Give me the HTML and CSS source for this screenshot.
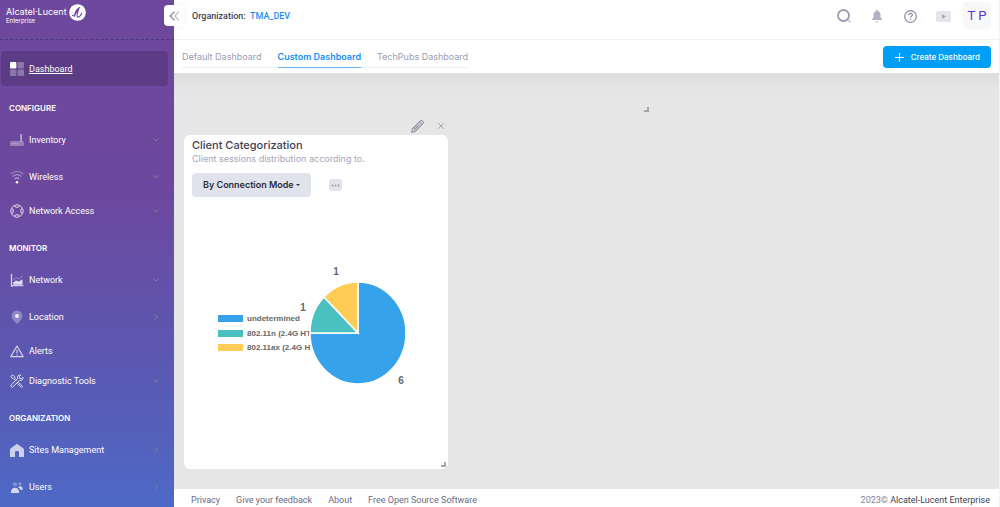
FILE: index.html
```html
<!DOCTYPE html>
<html lang="en">
<head>
    <meta charset="utf-8">
    <title>Custom Dashboard</title>
    <link rel="stylesheet" href="styles.css">
</head>
<body>
    <!-- Sidebar -->
    <aside class="sidebar">
        <div class="brand">
            <div class="brand-name">Alcatel·Lucent<small>Enterprise</small></div>
            <svg class="brand-logo" viewBox="0 0 18 18">
                <circle cx="9" cy="9" r="8.800" fill="#fff"/>
                <path d="M3.600 12.200c1.200.8 2.600-.5 3.800-2.500l3.400-5.800c-3.200 1.600-5.400 7-4.800 9.200M10.800 3.900 9 9.600c-.8 2.600-.7 4.400.5 4.300 1.500-.2 3-2 4-4.200" fill="none" stroke="#6e489d" stroke-width="1.100" stroke-linecap="round"/>
            </svg>
        </div>
        <button type="button" class="collapse" aria-label="Collapse menu">
            <svg width="11" height="10" viewBox="0 0 11 10" fill="none" stroke-width="1.300">
                <path d="M5.500 .8 1.200 5l4.300 4.200" stroke="#8b8ba3"/>
                <path d="M10 .8 5.700 5l4.300 4.200" stroke="#c3c3d0"/>
            </svg>
        </button>
        <nav class="menu">
            <a href="#" class="item active">
                <svg class="icon" viewBox="0 0 14 14" fill="#fff">
                    <rect width="6.400" height="6.400" rx="1"/>
                    <g opacity=".3"><rect x="7.600" width="6.400" height="6.400" rx="1"/><rect y="7.600" width="6.400" height="6.400" rx="1"/><rect x="7.600" y="7.600" width="6.400" height="6.400" rx="1"/></g>
                </svg>
                <span>Dashboard</span>
            </a>

            <h2 class="section">CONFIGURE</h2>
            <a href="#" class="item">
                <svg class="icon" viewBox="0 0 14 14" fill="#fff">
                    <rect x="10.500" y="1" width="1.200" height="7.500" opacity=".75"/>
                    <path opacity=".3" d="M1.500 8h11a1.500 1.500 0 0 1 1.500 1.500v2a1.500 1.500 0 0 1-1 1.500H1a1.500 1.500 0 0 1-1-1.500v-2A1.500 1.500 0 0 1 1.500 8z"/>
                    <path opacity=".35" d="M2 10h1.300v1.200H2zm2.500 0h1.300v1.200H4.500zM7 10h1.300v1.200H7z"/>
                </svg>
                <span>Inventory</span>
                <svg class="arrow" viewBox="0 0 6 6"><path d="M.5 1.500 3 4l2.500-2.500"/></svg>
            </a>
            <a href="#" class="item">
                <svg class="icon" viewBox="0 0 14 14" fill="none" stroke="#fff" stroke-width="1.200">
                    <path opacity=".3" d="M.8 4C4.500.4 9.500.4 13.200 4"/>
                    <path opacity=".4" d="M2.800 6.500c2.600-2.400 5.800-2.400 8.400 0"/>
                    <path opacity=".5" d="M4.800 9c1.400-1.300 3-1.300 4.400 0"/>
                    <circle cx="7" cy="12.300" r="1.200" fill="#fff" stroke="none"/>
                </svg>
                <span>Wireless</span>
                <svg class="arrow" viewBox="0 0 6 6"><path d="M.5 1.500 3 4l2.500-2.500"/></svg>
            </a>
            <a href="#" class="item tight">
                <svg class="icon" viewBox="0 0 14 14" fill="none" stroke="#fff" opacity=".8">
                    <path d="M5 1.800C3 1.800 1.800 3 1.800 5M9 1.800c2 0 3.200 1.200 3.200 3.200M5 12.200c-2 0-3.200-1.200-3.200-3.200M9 12.200c2 0 3.200-1.200 3.200-3.200"/>
                    <rect x="5" y=".8" width="4" height="2.400" rx="1"/><rect x="5" y="10.800" width="4" height="2.400" rx="1"/>
                    <rect x=".8" y="5" width="2.400" height="4" rx="1"/><rect x="10.800" y="5" width="2.400" height="4" rx="1"/>
                </svg>
                <span>Network Access</span>
                <svg class="arrow" viewBox="0 0 6 6"><path d="M.5 1.500 3 4l2.500-2.500"/></svg>
            </a>

            <h2 class="section">MONITOR</h2>
            <a href="#" class="item">
                <svg class="icon" viewBox="0 0 14 14" fill="#fff">
                    <path d="M.8 1h1.400v11H13.500v1.300H2.200V14H.8z" opacity=".7"/>
                    <path d="M3.200 11.700V9.500L6 7.500l3 1 3.500-2.200v5.400z" opacity=".8"/>
                    <path d="m3 7 3-2.500L9 6l3.500-3.500" fill="none" stroke="#fff" opacity=".3"/>
                </svg>
                <span>Network</span>
                <svg class="arrow" viewBox="0 0 6 6"><path d="M.5 1.500 3 4l2.500-2.500"/></svg>
            </a>
            <a href="#" class="item">
                <svg class="icon" viewBox="0 0 14 14" fill="#fff">
                    <path opacity=".3" d="M7 .5a5.300 5.300 0 0 1 5.300 5.400C12.300 8.800 9.600 11.600 7 14 4.400 11.600 1.700 8.800 1.700 5.900A5.300 5.300 0 0 1 7 .5z"/>
                    <circle cx="7" cy="6" r="2" opacity=".85"/>
                </svg>
                <span>Location</span>
                <svg class="arrow" viewBox="0 0 6 6"><path d="M2 .5 4.500 3 2 5.500"/></svg>
            </a>
            <a href="#" class="item tight">
                <svg class="icon" viewBox="0 0 14 14" fill="none" stroke="#fff" stroke-width="1.100" opacity=".75">
                    <path d="M7 2 13.200 12.600H.8z" stroke-linejoin="round"/>
                    <path d="M7 5.800v3.400M7 10.200v1.200"/>
                </svg>
                <span>Alerts</span>
            </a>
            <a href="#" class="item flush">
                <svg class="icon" viewBox="0 0 14 14" fill="none" stroke="#fff" opacity=".8">
                    <path d="M1 2.300 2.300 1l2 1.200.4 1.600 2 2-1 1-2-2L2.200 4.400zM8.300 8.200l3.900 3.700c.7.8-.4 1.900-1.200 1.200L7.300 9.300"/>
                    <path d="M12.900 3.200 11.400 4.600 9.600 4.400 9.400 2.600 10.800 1.100C8.500.4 6.900 2.400 7.600 4.500L1.200 11c-1 1.200.7 2.900 1.900 1.900l6.400-6.500c2.200.7 4.100-1 3.400-3.200z"/>
                </svg>
                <span>Diagnostic Tools</span>
                <svg class="arrow" viewBox="0 0 6 6"><path d="M.5 1.500 3 4l2.500-2.500"/></svg>
            </a>

            <h2 class="section">ORGANIZATION</h2>
            <a href="#" class="item">
                <svg class="icon" viewBox="0 0 14 14" fill="#fff" opacity=".7">
                    <path d="M7 .7 13.500 5.500c.3.300.5.7.5 1.100V14H9V9.500c0-1-.6-1.500-1.500-1.500h-1C5.600 8 5 8.500 5 9.500V14H0V6.600c0-.4.200-.8.500-1.100z"/>
                </svg>
                <span>Sites Management</span>
                <svg class="arrow" viewBox="0 0 6 6"><path d="M2 .5 4.500 3 2 5.500"/></svg>
            </a>
            <a href="#" class="item">
                <svg class="icon" viewBox="0 0 14 14" fill="#fff">
                    <g opacity=".3"><circle cx="5" cy="4.300" r="2.100"/><circle cx="10" cy="3.800" r="1.700"/></g>
                    <g opacity=".75"><path d="M.8 13c0-3.500 1.800-5.300 4.200-5.300S9.200 9.500 9.200 13z"/><path d="M8 7.200c2.300-1.900 4.700-.7 4.900 2.500h-2.600C9.800 8.700 9 7.700 8 7.200z"/></g>
                </svg>
                <span>Users</span>
                <svg class="arrow" viewBox="0 0 6 6"><path d="M2 .5 4.500 3 2 5.500"/></svg>
            </a>
        </nav>
    </aside>

    <div class="page">
        <!-- Top bar -->
        <header class="topbar">
            <div class="org">Organization: <a href="#">TMA_DEV</a></div>
            <div class="tools">
                <button type="button" class="tool" aria-label="Search">
                    <svg width="14" height="14" viewBox="0 0 14 14" fill="none"><path d="m10.500 10.500 3 3" stroke="#d5d5df" stroke-width="2"/><circle cx="6.500" cy="6.500" r="5.500" stroke="#9899ae" stroke-width="1.800"/></svg>
                </button>
                <button type="button" class="tool" aria-label="Notifications">
                    <svg width="12" height="13" viewBox="0 0 12 13" fill="#b1b1c0"><path d="M5.200 0h1.600v1.200C8.700 1.600 9.500 3 9.500 5v2.500L11.500 10H.5l2-2.500V5c0-2 .8-3.400 2.700-3.800z"/><rect x="4.500" y="11" width="3" height="1.700" rx=".8" fill="#d8d8e0"/></svg>
                </button>
                <button type="button" class="tool" aria-label="Help">
                    <svg width="13" height="13" viewBox="0 0 13 13" fill="none" stroke="#8c8ca3" stroke-width="1.200"><circle cx="6.500" cy="6.500" r="5.800"/><path d="M4.700 5.200c0-2.500 3.700-2.300 3.700-.2 0 1.200-1.800 1.200-1.800 2.500M6.600 8.700v1.200"/></svg>
                </button>
                <button type="button" class="tool" aria-label="Videos">
                    <svg width="15" height="11" viewBox="0 0 15 11"><rect width="15" height="11" rx="1.500" fill="#e5e5eb"/><path d="M6 3v5l4-2.500z" fill="#a9a9ba"/></svg>
                </button>
                <button type="button" class="avatar">T P</button>
            </div>
        </header>

        <div class="subbar">
            <nav class="tabs">
                <a href="#">Default Dashboard</a>
                <a href="#" class="current">Custom Dashboard</a>
                <a href="#">TechPubs Dashboard</a>
            </nav>
            <button type="button" class="create">
                <svg width="9" height="9" viewBox="0 0 9 9" stroke="#fff"><path d="M4.500 0v9M0 4.500h9"/></svg>
                Create Dashboard
            </button>
        </div>

        <!-- Widgets -->
        <main class="board">
            <section class="widget">
                <div class="widget-tools">
                    <button type="button" aria-label="Edit">
                        <svg width="13" height="13" viewBox="0 0 13 13" fill="none" stroke="#8f8fa6" stroke-width="1.100" stroke-linejoin="round"><path d="M.7 12.300 1.400 9 9.500.9c1.300-1 3.500 1.200 2.500 2.500L3.900 11.600zM8.300 2.100l2.500 2.500M3 10l5.300-5.400"/></svg>
                    </button>
                    <button type="button" aria-label="Remove">
                        <svg width="6" height="6" viewBox="0 0 6 6" stroke="#9a9aaa" stroke-width=".9"><path d="m.3.300 5.400 5.400M5.700.3.300 5.700"/></svg>
                    </button>
                </div>
                <div class="card">
                    <h1>Client Categorization</h1>
                    <p>Client sessions distribution according to.</p>
                    <div class="controls">
                        <button type="button" class="mode">By Connection Mode <i class="caret"></i></button>
                        <button type="button" class="more" aria-label="More">
                            <svg width="9" height="3" viewBox="0 0 9 3" fill="#9a9ab0"><circle cx="1.500" cy="1.500" r=".9"/><circle cx="4.500" cy="1.500" r=".9"/><circle cx="7.500" cy="1.500" r=".9"/></svg>
                        </button>
                    </div>
                    <svg class="chart" viewBox="0 0 248 256" role="img" aria-label="Client sessions by connection mode">
                        <g class="legend">
                            <rect x="26" y="108" width="25" height="7" fill="#36a2eb"/>
                            <rect x="26" y="123" width="25" height="7" fill="#4bc0c0"/>
                            <rect x="26" y="137" width="25" height="7" fill="#ffcd56"/>
                            <text x="55" y="114">undetermined</text>
                            <text x="55" y="129">802.11n (2.4G HT</text>
                            <text x="55" y="143">802.11ax (2.4G H</text>
                        </g>
                        <g stroke="#fff" stroke-width="1.500">
                            <path d="M166 126V75a48 51 0 1 1-48 51z" fill="#36a2eb"/>
                            <path d="M166 126h-48a48 51 0 0 1 14-36z" fill="#4bc0c0"/>
                            <path d="M166 126 132 90a48 51 0 0 1 34-15z" fill="#ffcd56"/>
                        </g>
                        <g class="counts">
                            <text x="144" y="68">1</text>
                            <text x="111" y="104">1</text>
                            <text x="209" y="177">6</text>
                        </g>
                    </svg>
                    <i class="grip"></i>
                </div>
            </section>
            <section class="empty"><i class="grip"></i></section>
        </main>

        <footer class="footer">
            <nav>
                <a href="#">Privacy</a>
                <a href="#">Give your feedback</a>
                <a href="#">About</a>
                <a href="#">Free Open Source Software</a>
            </nav>
            <div>2023© <a href="#">Alcatel-Lucent Enterprise</a></div>
        </footer>
    </div>
</body>
</html>
```
FILE: styles.css
```css
* {
    box-sizing: border-box;
}
body {
    margin: 0;
    display: flex;
    min-height: 100vh;
    font-family: Inter, sans-serif;
    font-size: 9px;
    line-height: 12px;
    color: #3f4254;
}
a {
    color: inherit;
    text-decoration: none;
}
button {
    font: inherit;
    border: none;
    padding: 0;
    background: none;
    cursor: pointer;
    display: flex;
    align-items: center;
    justify-content: center;
}

/* Sidebar */
.sidebar {
    position: relative;
    flex: 0 0 174px;
    font-family: Roboto, sans-serif;
    color: #fff;
    background: linear-gradient(#6e489d 0%, #6c489e 38%, #5a5ab4 75%, #4d69c6 100%);
}
.brand {
    display: flex;
    gap: 2px;
    height: 40px;
    padding: 4px 6px;
    border-bottom: 1px dashed #4b3a78;
}
.brand-name {
    font-family: Inter, sans-serif;
    font-size: 9px;
    line-height: 10px;
    padding-top: 3px;
}
.brand-name small {
    display: block;
    font-size: 6px;
    line-height: 8px;
}
.brand-logo {
    width: 17px;
    height: 17px;
}
.collapse {
    position: absolute;
    top: 5px;
    right: -10px;
    width: 20px;
    height: 21px;
    border-radius: 4px;
    background: #fff;
    box-shadow: 0 0 8px rgba(0, 0, 0, 0.06);
}
.menu {
    padding: 11px 6px 0 1px;
}
.section {
    margin: 12px 0 0 8px;
    font-family: Inter, sans-serif;
    font-size: 8px;
    line-height: 20px;
    font-weight: 600;
}
.item {
    display: flex;
    align-items: center;
    gap: 5px;
    height: 30px;
    margin-top: 7px;
    padding: 0 9px 0 9px;
}
.item.tight {
    margin-top: 4px;
}
.item.flush {
    margin-top: 0;
}
.item.active {
    height: 35px;
    margin-top: 0;
    border-radius: 4px;
    background: #5b3c85;
    text-decoration: underline;
}
.icon {
    width: 14px;
    height: 14px;
}
.arrow {
    width: 6px;
    height: 6px;
    margin-left: auto;
    fill: none;
    stroke: #84809f;
}

/* Top bar */
.page {
    flex: 1;
    min-width: 0;
    display: flex;
    flex-direction: column;
    border-right: 1px solid #f4f4f4;
}
.topbar {
    display: flex;
    justify-content: space-between;
    height: 40px;
    padding: 2px 8px 0 18px;
    border-bottom: 1px solid #f2f2f4;
}
.org {
    padding-top: 8px;
    font-family: Roboto, sans-serif;
    font-weight: 500;
}
.org a {
    margin-left: 2px;
    color: #1b8ff5;
}
.tools {
    display: flex;
    gap: 7px;
}
.tool {
    width: 26px;
    height: 28px;
}
.avatar {
    width: 28px;
    height: 27px;
    border-radius: 4px;
    background: #f8f8fa;
    color: #5a2fdc;
    font-family: Roboto, sans-serif;
    font-size: 13px;
}
.subbar {
    display: flex;
    align-items: flex-start;
    justify-content: space-between;
    height: 33px;
    padding: 6px 8px 0 8px;
}
.tabs {
    display: flex;
    gap: 16px;
    border-bottom: 1px solid #efeff3;
    line-height: 21px;
    color: #9b9bb3;
}
.tabs .current {
    margin-bottom: -1px;
    border-bottom: 1px solid #6db3f8;
    font-weight: 600;
    color: #0f90fb;
}
.create {
    gap: 7px;
    height: 22px;
    padding: 0 11px 0 12px;
    border-radius: 4px;
    background: #009ef7;
    color: #fff;
    font-size: 8px;
    font-weight: 500;
}

/* Widgets */
.board {
    flex: 1;
    display: flex;
    padding: 34px 10px 20px;
    background: linear-gradient(#dedede, #e6e6e6 20px);
}
.widget {
    flex: 0 0 264px;
}
.widget-tools {
    display: flex;
    justify-content: flex-end;
    gap: 14px;
    height: 28px;
    padding: 10px 4px 0 0;
}
.card {
    position: relative;
    height: 334px;
    padding: 4px 8px;
    border-radius: 6px;
    background: #fff;
}
.card h1 {
    margin: 0;
    font-size: 11px;
    font-weight: 500;
    line-height: 13px;
}
.card p {
    margin: 0;
    line-height: 13px;
    color: #a5a5bb;
}
.controls {
    display: flex;
    align-items: center;
    gap: 18px;
    margin-top: 8px;
}
.mode {
    gap: 2px;
    height: 24px;
    padding: 0 11px;
    border-radius: 4px;
    background: #e1e3ec;
    color: #2b2b40;
    font-weight: 600;
}
.caret {
    border: 2px solid transparent;
    border-top-color: #2b2b40;
    border-bottom: 0;
}
.more {
    width: 13px;
    height: 12px;
    border-radius: 3px;
    background: #e1e3ec;
}
.chart {
    display: block;
    width: 100%;
    height: 256px;
    margin-top: 10px;
    font-family: "Liberation Sans", Arial, sans-serif;
    font-weight: bold;
    fill: #666;
}
.legend {
    font-size: 8px;
}
.counts {
    font-size: 10px;
    text-anchor: middle;
}
.grip {
    position: absolute;
    right: 2px;
    bottom: 2px;
    width: 5px;
    height: 5px;
    border-right: 2px solid #a5a5a5;
    border-bottom: 2px solid #a5a5a5;
}
.empty {
    position: relative;
    flex: 0 0 203px;
    height: 7px;
}

/* Footer */
.footer {
    display: flex;
    justify-content: space-between;
    height: 18px;
    padding: 5px 9px 0 17px;
    font-family: Roboto, sans-serif;
    color: #7e8299;
}
.footer nav {
    display: flex;
    gap: 16px;
    color: #6b6b85;
}
.footer div a {
    color: #3f4254;
}
```
